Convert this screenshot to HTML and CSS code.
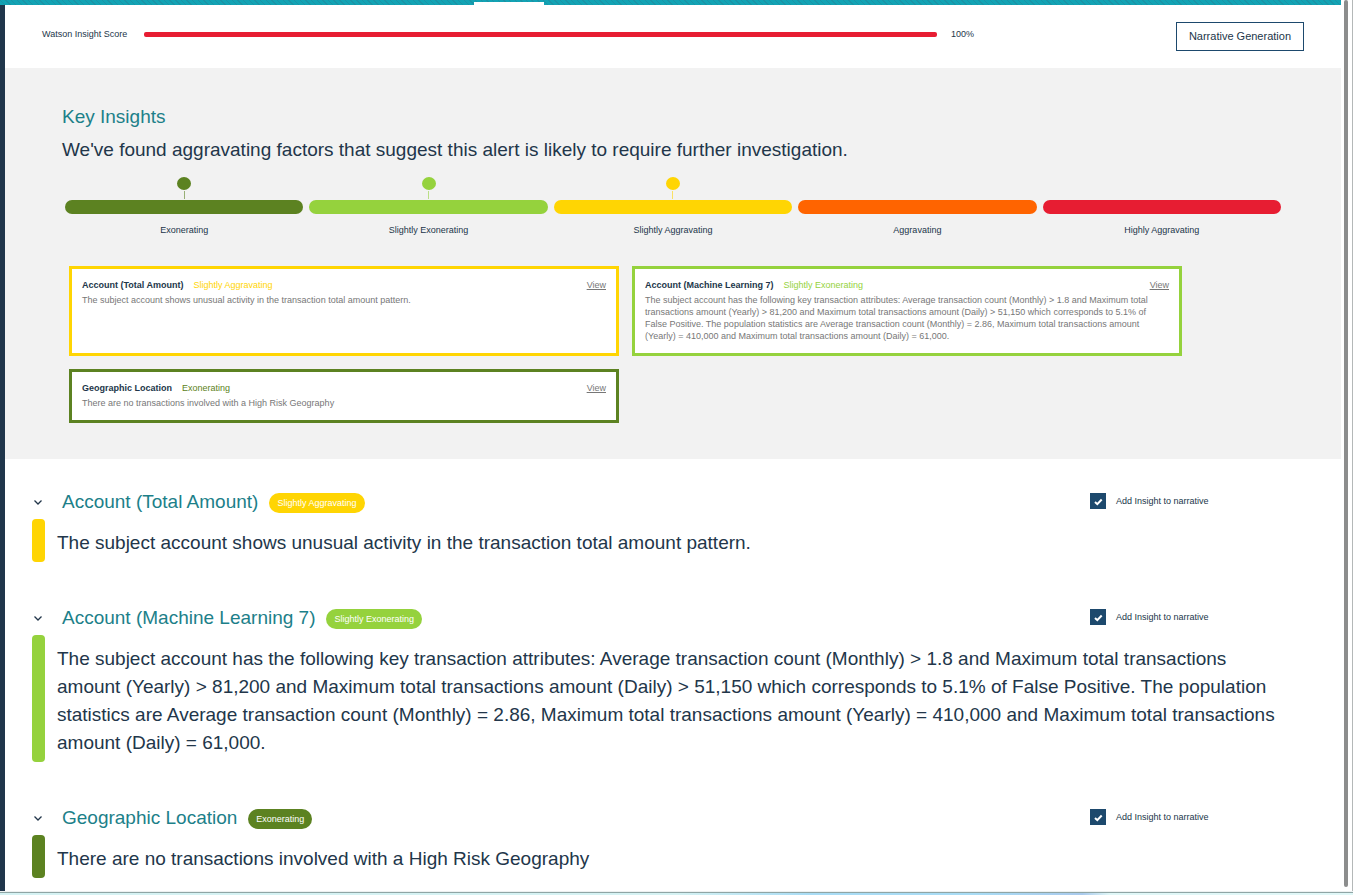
FILE: index.html
```html
<!DOCTYPE html>
<html lang="en">
<head>
<meta charset="utf-8">
<meta name="viewport" content="width=device-width, initial-scale=1">
<title>Key Insights</title>
<link rel="stylesheet" href="styles.css">
</head>
<body>
<div class="window">
  <div class="view">
    <div class="topbar"><div class="topbar-tab"></div></div>
    <div class="workspace">
      <div class="rail"></div>
      <main class="main">
        <header class="score">
          <span class="score-label">Watson Insight Score</span>
          <div class="score-bar"></div>
          <span class="score-value">100%</span>
          <button class="narrative-button" type="button">Narrative Generation</button>
        </header>

        <section class="summary">
          <h1 class="summary-title">Key Insights</h1>
          <p class="summary-text">We've found aggravating factors that suggest this alert is likely to require further investigation.</p>
          <div class="scale">
            <div class="scale-step exonerating"><div class="pin"></div><div class="stem"></div><div class="bar"></div><span>Exonerating</span></div>
            <div class="scale-step slight-exonerating"><div class="pin"></div><div class="stem"></div><div class="bar"></div><span>Slightly Exonerating</span></div>
            <div class="scale-step slight-aggravating"><div class="pin"></div><div class="stem"></div><div class="bar"></div><span>Slightly Aggravating</span></div>
            <div class="scale-step aggravating"><div class="bar"></div><span>Aggravating</span></div>
            <div class="scale-step high-aggravating"><div class="bar"></div><span>Highly Aggravating</span></div>
          </div>
          <div class="cards">
            <article class="card slight-aggravating">
              <div class="card-head"><h2>Account (Total Amount)</h2><span class="card-level">Slightly Aggravating</span><a href="#total-amount">View</a></div>
              <p>The subject account shows unusual activity in the transaction total amount pattern.</p>
            </article>
            <article class="card slight-exonerating">
              <div class="card-head"><h2>Account (Machine Learning 7)</h2><span class="card-level">Slightly Exonerating</span><a href="#machine-learning">View</a></div>
              <p>The subject account has the following key transaction attributes: Average transaction count (Monthly) &gt; 1.8 and Maximum total transactions amount (Yearly) &gt; 81,200 and Maximum total transactions amount (Daily) &gt; 51,150 which corresponds to 5.1% of False Positive. The population statistics are Average transaction count (Monthly) = 2.86, Maximum total transactions amount (Yearly) = 410,000 and Maximum total transactions amount (Daily) = 61,000.</p>
            </article>
            <article class="card exonerating">
              <div class="card-head"><h2>Geographic Location</h2><span class="card-level">Exonerating</span><a href="#geographic">View</a></div>
              <p>There are no transactions involved with a High Risk Geography</p>
            </article>
          </div>
        </section>

        <div class="details">
          <section class="detail slight-aggravating" id="total-amount">
            <div class="detail-head">
              <button class="toggle" type="button" aria-label="Collapse Account (Total Amount)"><svg width="8" height="5" viewBox="0 0 8 5"><path d="M0.5 0.5 4 4 7.5 0.5"/></svg></button>
              <h2>Account (Total Amount)</h2><span class="badge">Slightly Aggravating</span>
              <label class="include"><input type="checkbox" checked><svg width="16" height="16" viewBox="0 0 16 16"><path d="M5 9 7.3 11.2 11.7 6.5"/></svg>Add Insight to narrative</label>
            </div>
            <div class="detail-body"><div class="stripe"></div><p>The subject account shows unusual activity in the transaction total amount pattern.</p></div>
          </section>
          <section class="detail slight-exonerating" id="machine-learning">
            <div class="detail-head">
              <button class="toggle" type="button" aria-label="Collapse Account (Machine Learning 7)"><svg width="8" height="5" viewBox="0 0 8 5"><path d="M0.5 0.5 4 4 7.5 0.5"/></svg></button>
              <h2>Account (Machine Learning 7)</h2><span class="badge">Slightly Exonerating</span>
              <label class="include"><input type="checkbox" checked><svg width="16" height="16" viewBox="0 0 16 16"><path d="M5 9 7.3 11.2 11.7 6.5"/></svg>Add Insight to narrative</label>
            </div>
            <div class="detail-body"><div class="stripe"></div><p>The subject account has the following key transaction attributes: Average transaction count (Monthly) &gt; 1.8 and Maximum total transactions amount (Yearly) &gt; 81,200 and Maximum total transactions amount (Daily) &gt; 51,150 which corresponds to 5.1% of False Positive. The population statistics are Average transaction count (Monthly) = 2.86, Maximum total transactions amount (Yearly) = 410,000 and Maximum total transactions amount (Daily) = 61,000.</p></div>
          </section>
          <section class="detail exonerating" id="geographic">
            <div class="detail-head">
              <button class="toggle" type="button" aria-label="Collapse Geographic Location"><svg width="8" height="5" viewBox="0 0 8 5"><path d="M0.5 0.5 4 4 7.5 0.5"/></svg></button>
              <h2>Geographic Location</h2><span class="badge">Exonerating</span>
              <label class="include"><input type="checkbox" checked><svg width="16" height="16" viewBox="0 0 16 16"><path d="M5 9 7.3 11.2 11.7 6.5"/></svg>Add Insight to narrative</label>
            </div>
            <div class="detail-body"><div class="stripe"></div><p>There are no transactions involved with a High Risk Geography</p></div>
          </section>
        </div>
      </main>
    </div>
  </div>
  <div class="scrollbar"><div class="thumb"></div></div>
</div>
<div class="desktop-edge"></div>
</body>
</html>
```
FILE: styles.css
```css
* { box-sizing: border-box; }

body {
  margin: 0;
  height: 100vh;
  display: flex;
  flex-direction: column;
  overflow: hidden;
  background: #fff;
  color: #22364a;
  font-family: "Liberation Sans", Arial, sans-serif;
  font-size: 9px;
  line-height: 12px;
}

h1, h2, p { margin: 0; }
button { font-family: inherit; color: inherit; cursor: pointer; }

.exonerating { --tone: #5c8221; }
.slight-exonerating { --tone: #95d23d; }
.slight-aggravating { --tone: #ffd503; }
.aggravating { --tone: #ff6400; }
.high-aggravating { --tone: #e71d32; }

.window {
  flex: 1;
  min-height: 0;
  display: flex;
  border-right: 1px solid #b4b8b8;
}
.view {
  flex: 1;
  min-width: 0;
  display: flex;
  flex-direction: column;
}
.topbar {
  flex: none;
  height: 5px;
  padding: 2px 0 0 474px;
  background: repeating-linear-gradient(45deg, #12a3b4 0 3px, #1b93a6 3px 4px);
}
.topbar-tab { width: 70px; height: 3px; background: #fff; }
.workspace { flex: 1; min-height: 0; display: flex; }
.rail { flex: none; width: 5px; background: #20364b; }
.main { flex: 1; min-width: 0; overflow: hidden; }

.scrollbar { flex: none; width: 11px; padding: 0 4px 4px 3px; }
.thumb { height: 100%; border-radius: 2px; background: #8c8d8d; }
.desktop-edge {
  flex: none;
  height: 4px;
  border-top: 1px solid #edf1f1;
  background: linear-gradient(#8fa5a5 0 1px, transparent 1px),
    linear-gradient(90deg, #d5f2f3 0 50%, #a8dcf5 60% 72%, #a9caed 80%, #e0f7f7 82%);
}

.score {
  display: flex;
  align-items: flex-start;
  height: 63px;
  padding: 17px 37px 0;
}
.score-label, .score-value { flex: none; padding-top: 6px; }
.score-label { min-width: 88px; }
.score-bar {
  flex: 1;
  max-width: 793px;
  height: 5px;
  margin: 10px 14px 0;
  border-radius: 2px;
  background: #e71d32;
}
.narrative-button {
  flex: none;
  height: 29px;
  margin-left: auto;
  padding: 0 12px 2px;
  border: 1px solid #1d496d;
  background: #fff;
  font-size: 11px;
  line-height: 16px;
}

.summary { padding: 35px 57px 36px; background: #f2f2f2; }
.summary-title, .summary-text, .detail h2, .detail p { font-size: 19px; font-weight: 400; line-height: 28px; }
.summary-title, .detail h2 { color: #1c8089; }
.summary-text { padding-top: 5px; }
.scale {
  display: grid;
  grid-template-columns: repeat(5, 1fr);
  gap: 6px;
  align-items: end;
  padding: 13px 3px 0;
}
.scale-step { display: flex; flex-direction: column; align-items: center; }
.pin { width: 14px; height: 13px; border-radius: 50%; background: var(--tone); }
.stem { width: 1px; height: 8px; margin: 1px 0; background: var(--tone); opacity: 0.6; }
.bar { width: 100%; height: 14px; margin-bottom: 10px; border-radius: 7px; background: var(--tone); }

.cards {
  display: grid;
  grid-template-columns: 1fr 1fr;
  gap: 13px;
  padding: 30px 102px 0 7px;
}
.card { padding: 10px 10px 11px; border: 3px solid var(--tone); background: #fff; }
.card-head { display: flex; align-items: baseline; gap: 10px; margin-bottom: 3px; }
.card h2 { font-size: 9px; line-height: 12px; }
.card-level { color: var(--tone); }
.card a { margin-left: auto; color: #777; }
.card p { color: #777; }

.details { padding: 26px 29px 0 27px; }
.detail { margin-bottom: 39px; }
.detail-head { display: flex; align-items: center; height: 34px; }
.toggle {
  display: flex;
  width: 12px;
  height: 12px;
  padding: 4px 2px;
  border: 0;
  background: none;
}
.toggle svg { fill: none; stroke: #22364a; stroke-width: 1.3; }
.detail h2 { margin-left: 18px; }
.badge {
  margin: 2px 0 0 11px;
  padding: 4px 8px;
  border-radius: 10px;
  background: var(--tone);
  color: #fff;
}
.include {
  position: relative;
  display: flex;
  align-items: center;
  gap: 10px;
  width: 222px;
  margin: 0 0 2px auto;
}
.include input { appearance: none; width: 16px; height: 16px; margin: 0; background: #fff; border: 1px solid #1d496d; }
.include input:checked { background: #1d496d; }
.include svg { position: absolute; left: 0; fill: none; stroke: #fff; stroke-width: 2; pointer-events: none; }
.detail-body { display: flex; gap: 12px; }
.stripe { flex: none; width: 13px; border-radius: 4px; background: var(--tone); }
.detail-body p { padding: 10px 20px 5px 0; }
```
